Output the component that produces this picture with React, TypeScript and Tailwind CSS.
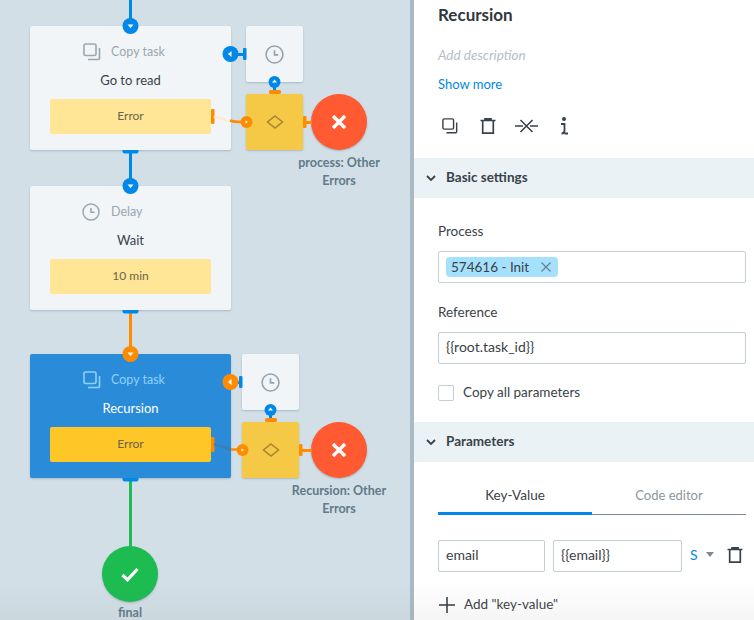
import React from "react";

const font = { fontFamily: 'Lato, "Noto Sans", sans-serif' };

function CopyIcon({ className, size = 18 }: { className?: string; size?: number }) {
  return (
    <svg width={size} height={size} viewBox="0 0 18 18" fill="none" stroke="currentColor" strokeWidth="1.6" className={className}>
      <rect x="1" y="1" width="12" height="11.5" rx="1.5" />
      <path d="M5 16.5h10.5a1 1 0 0 0 1-1V5" />
    </svg>
  );
}

function ClockIcon({ size = 18, className }: { size?: number; className?: string }) {
  return (
    <svg width={size} height={size} viewBox="0 0 18 18" fill="none" stroke="currentColor" strokeWidth="1.5" className={className}>
      <circle cx="9" cy="9" r="8" />
      <path d="M9 5v4.3h3.6" strokeWidth="1.6" />
    </svg>
  );
}

function TrashIcon({ className }: { className?: string }) {
  return (
    <svg width="16" height="16" viewBox="0 0 16 16" fill="none" stroke="currentColor" strokeWidth="1.7" className={className}>
      <path d="M0.5 2.5h15M5 2.5V.8h6v1.7M2.7 2.5v12.6h10.6V2.5" />
    </svg>
  );
}

function Card({
  top,
  kind,
  name,
  box,
  selected,
}: {
  top: string;
  kind: "copy" | "delay";
  name: string;
  box: string;
  selected?: boolean;
}) {
  return (
    <div
      className={`absolute left-[30px] w-[201px] h-[124px] rounded-[2px] shadow-[0_1px_2px_rgba(70,100,120,0.3)] flex flex-col items-center pt-[17px] ${top} ${
        selected ? "bg-[#2a8bd8]" : "bg-[#f1f5f7]"
      }`}
    >
      <div className={`self-start h-[18px] flex items-center text-[12.5px] ${kind === "copy" ? "pl-[53px] gap-[10px]" : "pl-[52px] gap-[11px]"} ${selected ? "text-[#8ed1fb]" : "text-[#9aa7b0]"}`}>
        {kind === "copy" ? <CopyIcon /> : <ClockIcon />}
        <span>{kind === "copy" ? "Copy task" : "Delay"}</span>
      </div>
      <div className={`mt-[10px] h-[18px] leading-[18px] text-[13px] ${selected ? "text-white" : "text-[#3a4248]"}`}>{name}</div>
      <div
        className={`mt-[10px] w-[161px] h-[35px] pb-[1px] rounded-[2px] flex items-center justify-center text-[12px] text-[#6a654e] ${
          selected ? "bg-[#ffc627]" : "bg-[#ffe596]"
        }`}
      >
        {box}
      </div>
    </div>
  );
}

function TimerNode({ top, left }: { top: string; left: string }) {
  return (
    <div className={`absolute w-[57px] h-[56px] rounded-[2px] bg-[#f1f5f7] shadow-[0_1px_2px_rgba(70,100,120,0.3)] flex items-center justify-center text-[#94a4af] ${top} ${left}`}>
      <ClockIcon size={19} />
    </div>
  );
}

function GateNode({ top, left }: { top: string; left: string }) {
  return (
    <div className={`absolute w-[57px] h-[56px] rounded-[2px] bg-[#f5c945] shadow-[0_1px_2px_rgba(70,100,120,0.3)] flex items-center justify-center ${top} ${left}`}>
      <svg width="18" height="14" viewBox="0 0 18 14" fill="none" stroke="#a8842f" strokeWidth="1.5">
        <path d="M9 1l7.5 6L9 13 1.5 7z" />
      </svg>
    </div>
  );
}

function EndNode({ top, left, color, check }: { top: string; left: string; color: string; check?: boolean }) {
  return (
    <div className={`absolute w-[56px] h-[56px] rounded-full shadow-[0_1px_2px_rgba(70,100,120,0.35)] flex items-center justify-center ${top} ${left} ${color}`}>
      {check ? (
        <svg width="18" height="15" viewBox="0 0 18 15" fill="none" stroke="#fff" strokeWidth="3.2">
          <path d="M1.5 8l5 4.8L16.5 2" />
        </svg>
      ) : (
        <svg width="14" height="14" viewBox="0 0 14 14" fill="none" stroke="#fff" strokeWidth="3.4">
          <path d="M1 1l12 12M13 1L1 13" />
        </svg>
      )}
    </div>
  );
}

const BLUE = "#0088e8";
const ORANGE = "#ff8c00";

function Edges() {
  return (
    <svg className="absolute left-0 top-0" width="410" height="620" viewBox="0 0 410 620" fill="none">
      <rect x="129" y="0" width="3" height="20" fill={BLUE} />
      <rect x="129" y="152" width="3" height="28" fill={BLUE} />
      <rect x="129" y="312" width="3" height="38" fill={ORANGE} />
      <rect x="129" y="480" width="3" height="68" fill="#1fb955" />
      <path d="M122.500 150h16v1.500a2 2 0 0 1-2 2h-12a2 2 0 0 1-2-2z" fill={BLUE} />
      <path d="M122.500 310h16v1.500a2 2 0 0 1-2 2h-12a2 2 0 0 1-2-2z" fill={BLUE} />
      <path d="M122.500 478h16v1.500a2 2 0 0 1-2 2h-12a2 2 0 0 1-2-2z" fill={BLUE} />

      <circle cx="130.500" cy="26" r="8" fill={BLUE} />
      <path d="M127.500 24.500h6l-3 3.500z" fill="#fff" />
      <circle cx="130.500" cy="186" r="8" fill={BLUE} />
      <path d="M127.500 184.500h6l-3 3.500z" fill="#fff" />
      <circle cx="130.500" cy="354" r="8" fill={ORANGE} />
      <path d="M127.500 352.500h6l-3 3.500z" fill="#fff" />

      <rect x="236" y="53" width="8" height="3" fill={BLUE} />
      <rect x="243" y="48" width="3.500" height="12" rx="1" fill={BLUE} />
      <circle cx="230.500" cy="54" r="8" fill={BLUE} />
      <path d="M228 54l3.500-3v6z" fill="#fff" />

      <rect x="273" y="86" width="3" height="5" fill={BLUE} />
      <rect x="269" y="90" width="12" height="4" rx="1.500" fill={ORANGE} />
      <circle cx="274.500" cy="82" r="6" fill={BLUE} />
      <path d="M274.500 79.500l2.500 3h-5z" fill="#fff" />

      <rect x="211" y="109" width="3.500" height="15" rx="1" fill={ORANGE} />
      <path d="M214 116.500l13 3.800" stroke="#ffe9cf" strokeWidth="2.500" />
      <path d="M230 120.500c2 .8 4 1.500 12 1.500" stroke={ORANGE} strokeWidth="2.500" />
      <circle cx="246.500" cy="122" r="6" fill={ORANGE} />
      <path d="M245.500 120.500l2.500 1.500-2.500 1.500z" fill="#fff" />

      <rect x="303" y="116" width="3.500" height="12" rx="1" fill={ORANGE} />
      <rect x="306" y="121" width="6" height="3" fill={ORANGE} />

      <rect x="236" y="381" width="5" height="3" fill={BLUE} />
      <rect x="239" y="376" width="3.500" height="12" rx="1" fill={BLUE} />
      <circle cx="230.500" cy="382" r="8" fill={ORANGE} />
      <path d="M228 382l3.500-3v6z" fill="#fff" />

      <rect x="269" y="414" width="3" height="5" fill={BLUE} />
      <rect x="265" y="418" width="12" height="4" rx="1.500" fill={ORANGE} />
      <circle cx="270.500" cy="410" r="6" fill={BLUE} />
      <path d="M270.500 407.500l2.500 3h-5z" fill="#fff" />

      <rect x="211" y="437" width="3.500" height="15" rx="1" fill={ORANGE} />
      <path d="M214 444l17 5.300" stroke="#3a7fb5" strokeWidth="2.500" />
      <path d="M231 449.500h8" stroke={ORANGE} strokeWidth="2.500" />
      <circle cx="242.500" cy="450" r="6" fill={ORANGE} />
      <path d="M241.500 448.500l2.500 1.500-2.500 1.500z" fill="#fff" />

      <rect x="299" y="444" width="3.500" height="12" rx="1" fill={ORANGE} />
      <rect x="302" y="449" width="10" height="3" fill={ORANGE} />
    </svg>
  );
}

function Label({ children, left, top, width, tight }: { children: React.ReactNode; left: string; top: string; width: string; tight?: boolean }) {
  return (
    <div className={`absolute text-center text-[12.5px] font-bold text-[#607a8a] ${tight ? "leading-[12px]" : "leading-[18px]"} ${left} ${top} ${width}`}>{children}</div>
  );
}

function Canvas() {
  return (
    <div className="relative w-[410px] h-[620px] shrink-0 bg-[#d2dfe6] overflow-hidden">
      <Card top="top-[26px]" kind="copy" name="Go to read" box="Error" />
      <Card top="top-[186px]" kind="delay" name="Wait" box="10 min" />
      <Card top="top-[354px]" kind="copy" name="Recursion" box="Error" selected />
      <TimerNode top="top-[26px]" left="left-[246px]" />
      <GateNode top="top-[94px]" left="left-[246px]" />
      <EndNode top="top-[94px]" left="left-[311px]" color="bg-[#ff5a32]" />
      <TimerNode top="top-[354px]" left="left-[242px]" />
      <GateNode top="top-[422px]" left="left-[242px]" />
      <EndNode top="top-[422px]" left="left-[311px]" color="bg-[#ff5a32]" />
      <EndNode top="top-[546px]" left="left-[102px]" color="bg-[#1cbc50]" check />
      <Edges />
      <Label left="left-[279px]" top="top-[154px]" width="w-[120px]">process: Other<br />Errors</Label>
      <Label left="left-[279px]" top="top-[482px]" width="w-[120px]">Recursion: Other<br />Errors</Label>
      <Label left="left-[70px]" top="top-[607px]" width="w-[120px]" tight>final</Label>
    </div>
  );
}

function Section({ title }: { title: string }) {
  return (
    <div className="h-10 bg-[#ebf2f6] flex items-center pl-[12px] gap-[10px] text-[13.5px] font-bold text-[#38424a]">
      <svg width="10" height="7" viewBox="0 0 10 7" fill="none" stroke="#38424a" strokeWidth="1.8">
        <path d="M1 1l4 4 4-4" />
      </svg>
      <span className="mb-[2px]">{title}</span>
    </div>
  );
}

function Input({ value, className }: { value: string; className?: string }) {
  return (
    <div className={`h-8 border border-[#c3ced5] rounded-[2px] flex items-center px-[7px] pb-[3px] text-[14px] text-[#3a4248] ${className ?? ""}`}>{value}</div>
  );
}

function Panel() {
  return (
    <div className="flex-1 h-[620px] bg-white overflow-hidden text-[#3a4248]">
      <div className="pl-6 pt-[3px] h-[158px]">
        <div className="h-6 leading-6 text-[17px] font-bold text-[#30373d]">Recursion</div>
        <div className="mt-[16px] h-6 leading-6 text-[13.5px] italic text-[#b5bec5]">Add description</div>
        <div className="mt-[5px] h-6 leading-6 text-[13px] text-[#0088e8]">Show more</div>
        <div className="mt-[21px] ml-1 flex items-center h-[18px] text-[#38424a]">
          <CopyIcon size={16} />
          <TrashIcon className="ml-[22px]" />
          <svg width="23" height="14" viewBox="0 0 23 14" fill="none" stroke="currentColor" strokeWidth="1.6" className="ml-[19px]">
            <path d="M0 7h8M15 7h8M5.500 1l12 12M17.500 1l-12 12" />
          </svg>
          <svg width="9" height="18" viewBox="0 0 9 18" fill="none" stroke="currentColor" strokeWidth="1.8" className="ml-[22px]">
            <circle cx="4" cy="2" r="1.100" fill="currentColor" />
            <path d="M1 7h3.500v6.500c0 2-1 3-3 3M4.500 16.500H8" />
          </svg>
        </div>
      </div>
      <Section title="Basic settings" />
      <div className="pl-6 pr-2 pt-[23px]">
        <div className="h-5 leading-5 text-[13.5px]">Process</div>
        <div className="mt-[10px] h-8 border border-[#c3ced5] rounded-[2px] flex items-center pl-[7px]">
          <div className="h-5 w-[112px] bg-[#a5e0fd] rounded-[4px] flex items-center pl-[5px] gap-[12px] text-[13.5px]">
            574616 - Init
            <svg width="10" height="10" viewBox="0 0 10 10" fill="none" stroke="#66808f" strokeWidth="1.200">
              <path d="M.5.5l9 9M9.500.5l-9 9" />
            </svg>
          </div>
        </div>
        <div className="mt-[19px] h-5 leading-5 text-[13.5px]">Reference</div>
        <Input value="{{root.task_id}}" className="mt-[10px]" />
        <div className="mt-[21px] flex items-center gap-[9px] h-4 text-[13.5px]">
          <div className="w-4 h-4 border border-[#c3ced5] rounded-[2px]" />
          <span className="mb-[2px]">Copy all parameters</span>
        </div>
      </div>
      <div className="mt-[21px]">
        <Section title="Parameters" />
      </div>
      <div className="pl-6 pr-2">
        <div className="flex h-[53px]">
          <div className="flex-1 flex items-center justify-center pt-[16px] text-[13.5px] border-b-[3px] border-[#0088e8]">Key-Value</div>
          <div className="flex-1 flex items-center justify-center pt-[14px] text-[13px] text-[#8a969e] relative">
            Code editor
            <div className="absolute left-0 right-0 bottom-0 h-px bg-[#7d8a93]" />
          </div>
        </div>
        <div className="mt-[25px] flex items-center">
          <Input value="email" className="w-[107px]" />
          <Input value="{{email}}" className="w-[129px] ml-2" />
          <span className="ml-[8px] mb-[3px] text-[14px] text-[#0088e8]">S</span>
          <svg width="8" height="5" viewBox="0 0 8 5" className="ml-[8px] mb-[3px]">
            <path d="M0 0h8L4 5z" fill="#7d8a93" />
          </svg>
          <TrashIcon className="ml-[13px] mt-[-2px]" />
        </div>
        <div className="mt-[22px] flex items-center h-[22px] text-[13.5px]">
          <svg width="16" height="16" viewBox="0 0 16 16" stroke="#30373d" strokeWidth="1.500" className="ml-px">
            <path d="M8 0v16M0 8h16" />
          </svg>
          <span className="ml-[9px] mb-[2px]">Add "key-value"</span>
        </div>
      </div>
    </div>
  );
}

export default function App() {
  return (
    <div className="relative flex w-[754px] h-[620px] overflow-hidden" style={font}>
      <Canvas />
      <div className="w-1 h-[620px] shrink-0 bg-[#a9bac4]" />
      <Panel />
      <div className="absolute left-0 right-0 bottom-0 h-[40px] bg-gradient-to-b from-transparent to-[rgba(120,120,120,0.07)] pointer-events-none" />
    </div>
  );
}
